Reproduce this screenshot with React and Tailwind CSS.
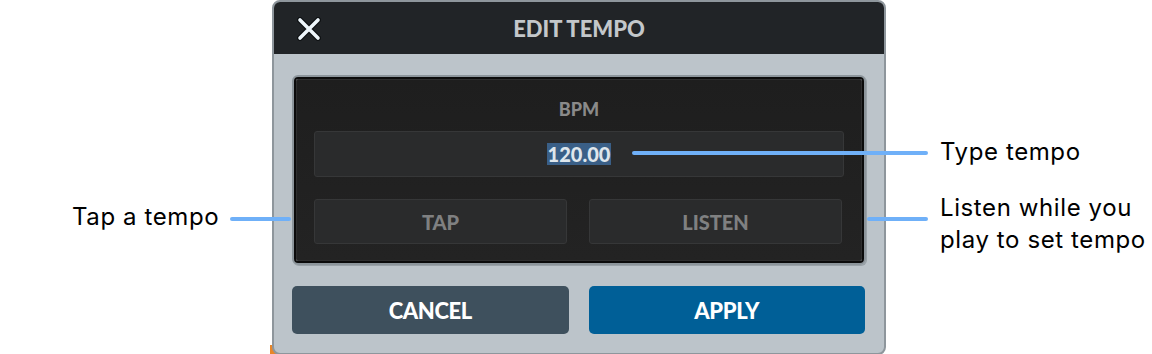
import React from 'react'

const Callout = ({ className }) => (
	<div className={'absolute h-[4px] rounded-full bg-[#6fb0f8] ' + className} />
)

export default function App() {
	return (
		<div className="relative w-[1152px] h-[354px] overflow-hidden bg-white font-['Inter','Liberation_Sans',sans-serif]">
			<div className="absolute left-[270px] top-[345px] w-[10px] h-[10px] bg-[#e8872a]" />

			<div className="relative ml-[272px] w-[614px] h-[355px] flex flex-col rounded-[8px] border-2 border-[#8e969c] bg-[#bcc4ca] overflow-hidden">
				<div className="relative h-[52px] bg-[#212427] flex items-center justify-center">
					<button className="absolute left-[22px] top-[14px] w-[26px] h-[26px] flex items-center justify-center">
						<svg width="24" height="24" viewBox="0 0 24 24">
							<path d="M3 3 L21 21 M21 3 L3 21" stroke="#0e1113" strokeWidth="6" strokeLinecap="round" fill="none" />
							<path d="M3 3 L21 21 M21 3 L3 21" stroke="#eef6fb" strokeWidth="3.6" strokeLinecap="round" fill="none" />
						</svg>
					</button>
					<div className="font-['Lato','Open_Sans',sans-serif] font-black text-[22px] tracking-[0px] text-[#c3c7ca]">EDIT TEMPO</div>
				</div>

				<div className="flex flex-col px-[18px] pt-[21px]">
					<div className="rounded-[6px] border-2 border-[#8c959b] shadow-[1px_1px_0_#9aa2a8]">
						<div className="rounded-[4px] border-2 border-[#0b0b0b]">
							<div className="rounded-[2px] border border-[#2e2e2e] bg-gradient-to-b from-[#1e1e1e] to-[#232323] px-[17px] pt-[18px] pb-[16px] flex flex-col">
								<div className="text-center font-['Lato','Open_Sans',sans-serif] font-black text-[18px] text-[#8a8a8a] leading-[22px]">BPM</div>
								<div className="mt-[11px] h-[46px] rounded-[3px] border border-[#363738] bg-[#2a2b2c] flex items-center justify-center">
									<span className="font-['Lato','Open_Sans',sans-serif] font-black text-[20px] leading-[22px] px-[1px] bg-[#3a5f87] text-[#dfe6ec]">120.00</span>
								</div>
								<div className="mt-[22px] flex gap-[22px] pr-[2px]">
									<div className="flex-1 h-[45px] rounded-[3px] border border-[#363738] bg-[#2a2b2c] flex items-center justify-center font-['Lato','Open_Sans',sans-serif] font-black text-[20px] text-[#7f8081]">TAP</div>
									<div className="flex-1 h-[45px] rounded-[3px] border border-[#363738] bg-[#2a2b2c] flex items-center justify-center font-['Lato','Open_Sans',sans-serif] font-black text-[20px] text-[#7f8081]">LISTEN</div>
								</div>
							</div>
						</div>
					</div>

					<div className="mt-[21px] flex gap-[20px] pr-[1px]">
						<button className="flex-1 h-[48px] rounded-[5px] bg-[#3e505d] font-['Lato','Open_Sans',sans-serif] font-black text-[22px] tracking-[-0.4px] text-white">CANCEL</button>
						<button className="flex-1 h-[48px] rounded-[5px] bg-[#005f97] font-['Lato','Open_Sans',sans-serif] font-black text-[22px] tracking-[-0.4px] text-white">APPLY</button>
					</div>
				</div>
			</div>

			<Callout className="left-[632px] top-[151px] w-[296px]" />
			<Callout className="left-[230px] top-[217px] w-[61px]" />
			<Callout className="left-[867px] top-[217px] w-[61px]" />

			<div className="absolute left-[72px] top-[202px] text-[24px] tracking-[0.6px] leading-[30px] text-black">Tap a tempo</div>
			<div className="absolute left-[940px] top-[137px] text-[24px] tracking-[0.6px] leading-[30px] text-black">Type tempo</div>
			<div className="absolute left-[940px] top-[192px] text-[24px] tracking-[0.6px] leading-[32px] text-black">Listen while you<br />play to set tempo</div>
		</div>
	)
}
